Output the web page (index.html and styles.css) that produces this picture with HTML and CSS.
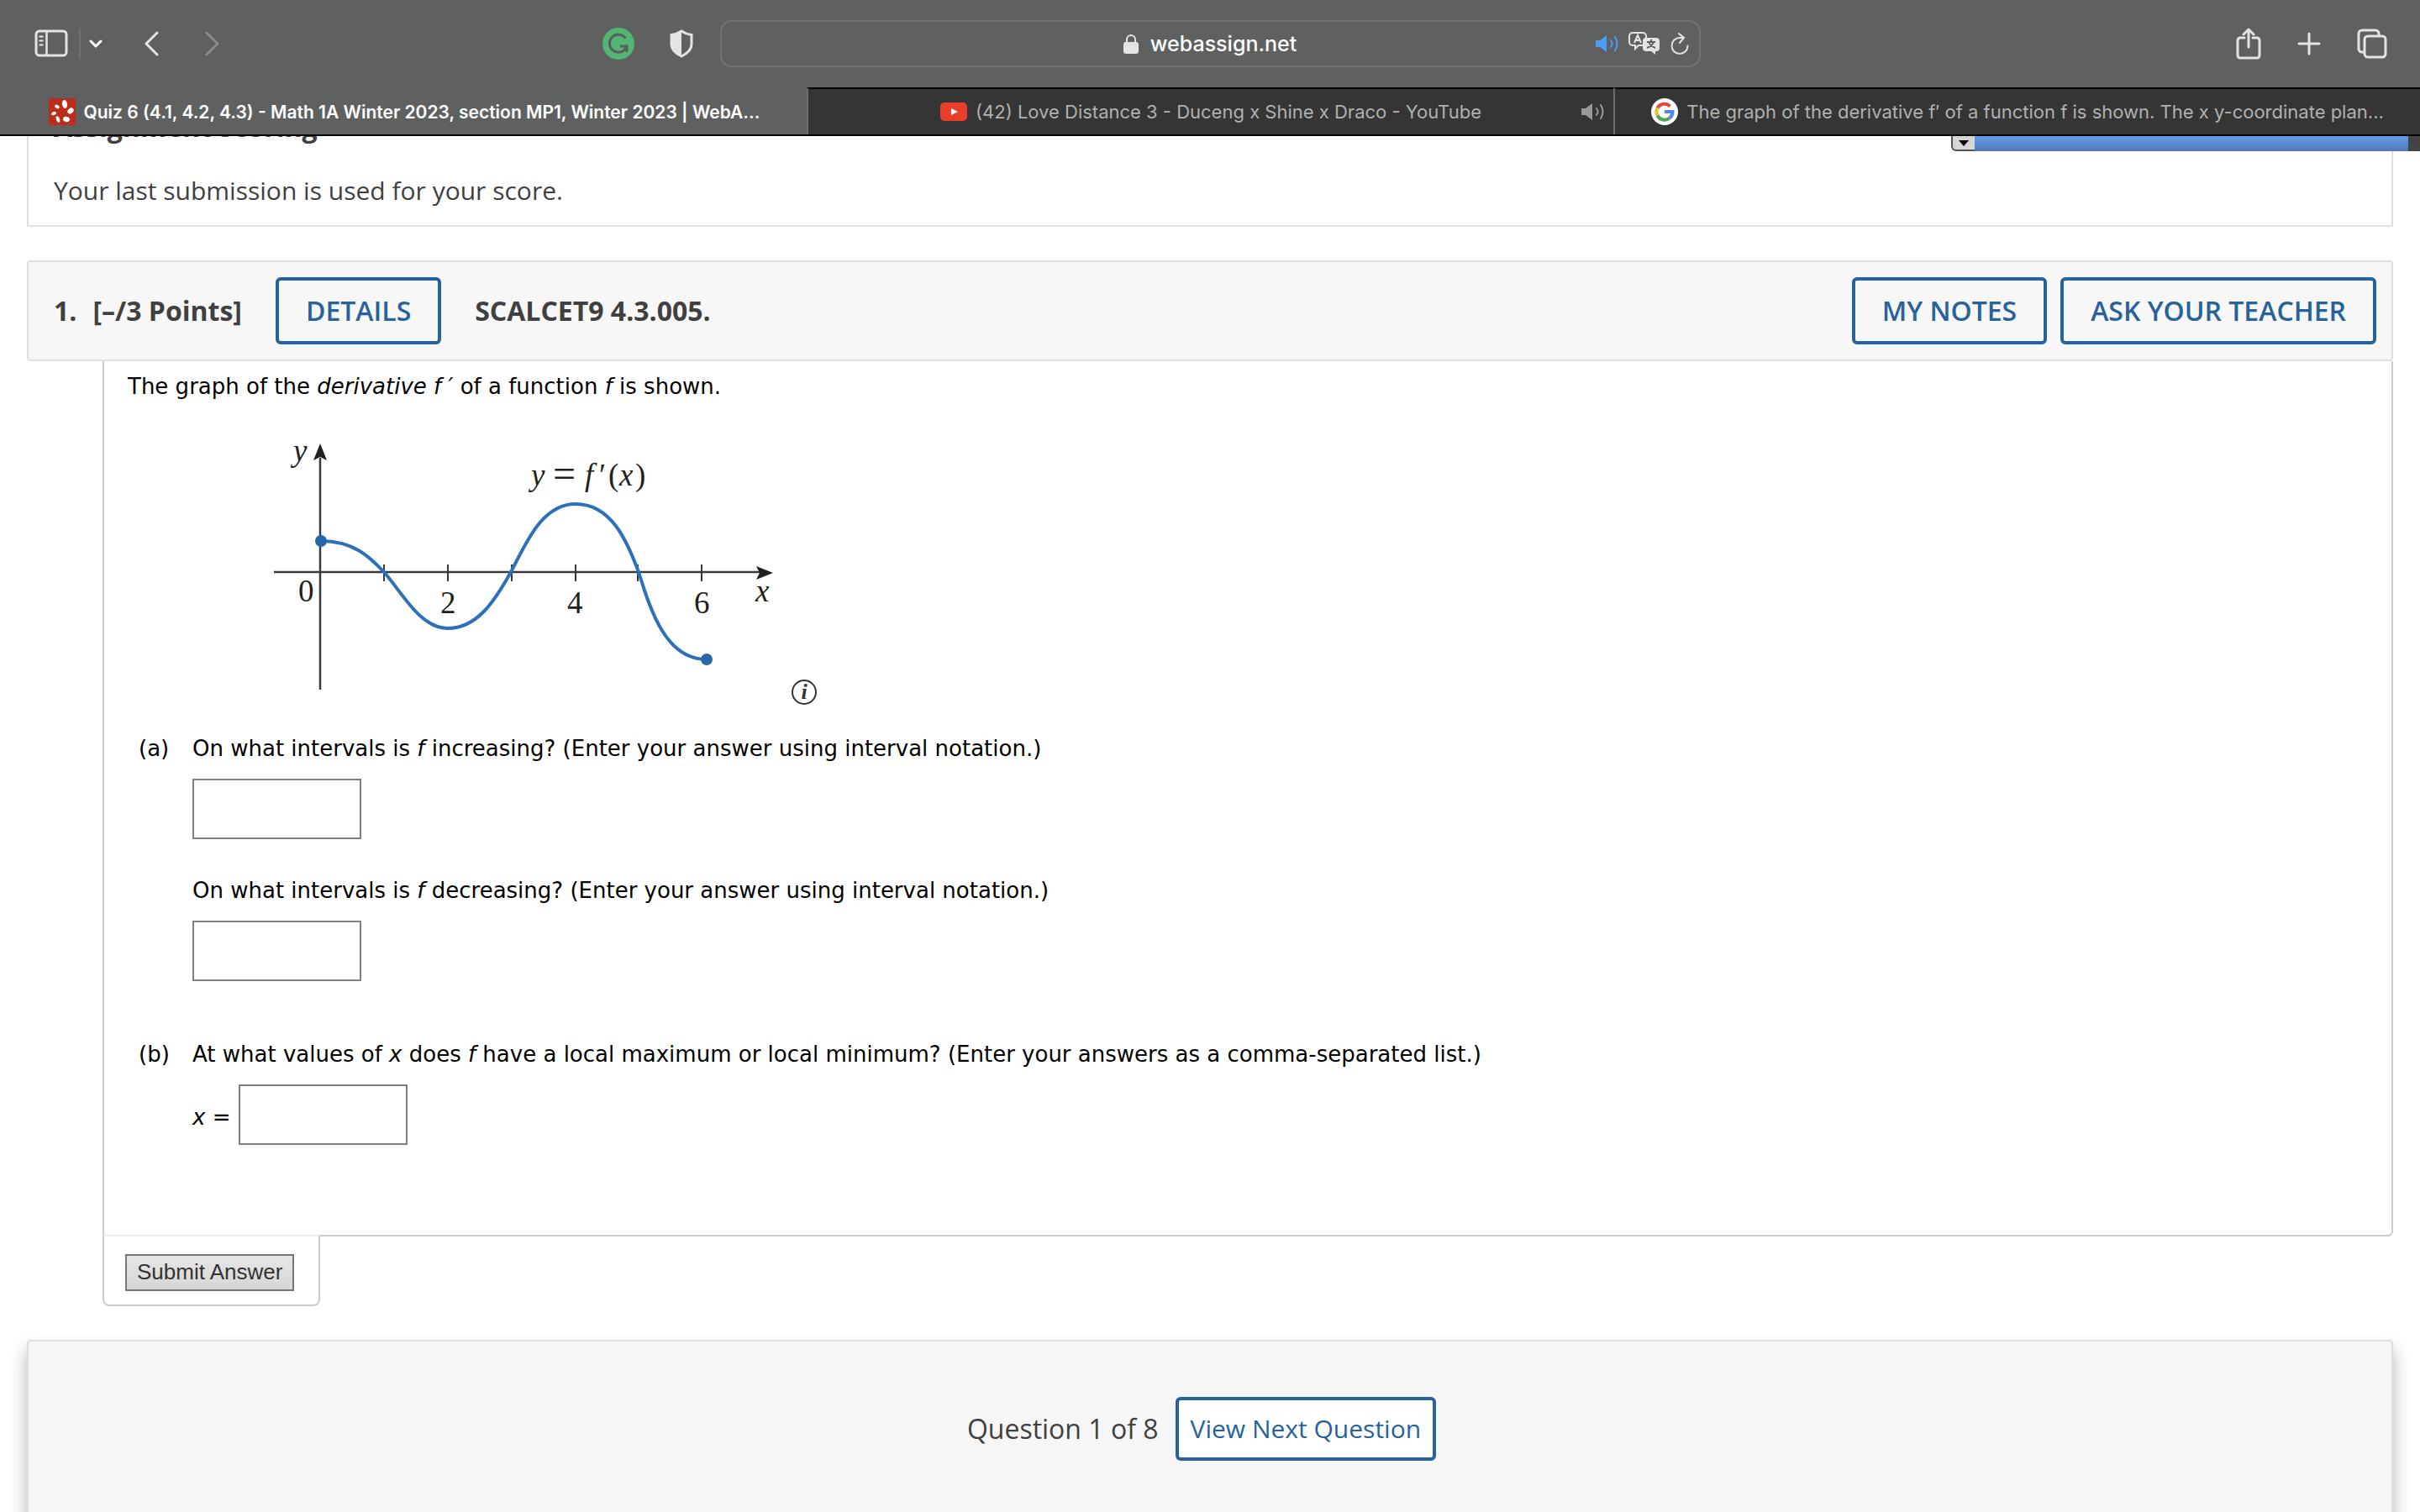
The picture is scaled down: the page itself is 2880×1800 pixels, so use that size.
FILE: index.html
```
<!DOCTYPE html>
<html lang="en">
<head>
  <meta charset="UTF-8" />
  <meta name="viewport" content="width=device-width, initial-scale=1" />
  <title>Quiz 6 (4.1, 4.2, 4.3) - WebAssign</title>
  <link rel="stylesheet" href="styles.css">
</head>
<body>
  <header class="browser">
    <div class="toolbar">
      <div class="toolbar-side">
        <div class="tools tools-left">
          <button class="tool sidebar" aria-label="Sidebar">
            <svg width="40" height="34" viewBox="0 0 40 34" fill="none" stroke="currentColor" stroke-width="3">
              <rect x="2" y="2" width="36" height="29" rx="4" />
              <path d="M14.500 2v29" stroke-width="2.500" />
              <path d="M5.500 8.500h5M5.500 13.500h5M5.500 18.500h5" stroke-width="2" />
            </svg>
          </button>
          <span class="divider"></span>
          <button class="tool tab-groups" aria-label="Tab groups">
            <svg width="16" height="12" viewBox="0 0 16 12" fill="none" stroke="#fff" stroke-width="3" stroke-linecap="round" stroke-linejoin="round"><path d="M2 3l6 6 6-6" /></svg>
          </button>
          <button class="tool back" aria-label="Back">
            <svg width="18" height="32" viewBox="0 0 18 32" fill="none" stroke="currentColor" stroke-width="3" stroke-linecap="round" stroke-linejoin="round"><path d="M16 3L3 16l13 13" /></svg>
          </button>
          <button class="tool forward" aria-label="Forward" disabled>
            <svg width="18" height="32" viewBox="0 0 18 32" fill="none" stroke="currentColor" stroke-width="3" stroke-linecap="round" stroke-linejoin="round"><path d="M2 3l13 13L2 29" /></svg>
          </button>
        </div>
        <div class="tools tools-ext">
          <button class="tool" aria-label="Grammarly">
            <svg width="38" height="38" viewBox="0 0 38 38" fill="none">
              <circle cx="19" cy="19" r="19" fill="#52b475" />
              <path d="M27.500 12.500a10.500 10.500 0 1 0 1 10.500M21 22h8v7" stroke="#565f59" stroke-width="3" />
            </svg>
          </button>
          <button class="tool" aria-label="Privacy report">
            <svg width="28" height="34" viewBox="0 0 28 34">
              <path d="M14 2C11 4 6 6 2 6.500V18c0 7 6 11 12 14 6-3 12-7 12-14V6.500C22 6 17 4 14 2z" fill="none" stroke="#e3e4e3" stroke-width="3" />
              <path d="M14 2C11 4 6 6 2 6.500V18c0 7 6 11 12 14z" fill="#e3e4e3" />
            </svg>
          </button>
        </div>
      </div>
      <div class="address">
        <div class="site">
          <svg width="18" height="24" viewBox="0 0 18 24">
            <path d="M4 12V7a5 5 0 0 1 10 0v5" fill="none" stroke="#e3e4e3" stroke-width="2" />
            <rect y="10" width="18" height="14" rx="3" fill="#e3e4e3" />
          </svg>
          <span>webassign.net</span>
        </div>
        <div class="address-icons">
          <svg width="28" height="22" viewBox="0 0 28 22" fill="none" stroke="#4c9cf7" stroke-width="2" stroke-linecap="round">
            <path d="M1 7h5l8-6v20l-8-6H1z" fill="#4c9cf7" stroke="none" />
            <path d="M19 7q3 4 0 8M24 3q5 8 0 16" />
          </svg>
          <svg width="38" height="28" viewBox="0 0 38 28" fill="none" stroke="#e3e4e3" stroke-width="2">
            <path d="M17 16h-5l-4 4v-4H5a4 4 0 0 1-4-4V5a4 4 0 0 1 4-4h12a4 4 0 0 1 4 4v2" />
            <path d="M7 13l4-9 4 9M8 10h6" />
            <path d="M21 7h12a4 4 0 0 1 4 4v8a4 4 0 0 1-4 4h-1v4l-5-4h-6a4 4 0 0 1-4-4v-8a4 4 0 0 1 4-4z" fill="#e3e4e3" stroke="none" />
            <path d="M22 12h10M27 9v3M30 12q-2 5-8 7M24 12q2 5 8 7" stroke="#5f6160" />
          </svg>
          <svg width="22" height="26" viewBox="0 0 22 26" fill="none" stroke="#e3e4e3" stroke-width="2" stroke-linecap="round">
            <path d="M15 6h-4a9.500 9.500 0 1 0 9.500 9.500M10 1l6 5-5 6" />
          </svg>
        </div>
      </div>
      <div class="tools tools-right">
        <button class="tool" aria-label="Share">
          <svg width="30" height="38" viewBox="0 0 30 38" fill="none" stroke="currentColor" stroke-width="3" stroke-linecap="round" stroke-linejoin="round">
            <path d="M10 12H5a3 3 0 0 0-3 3v18a3 3 0 0 0 3 3h20a3 3 0 0 0 3-3V15a3 3 0 0 0-3-3h-5M15 23V2M9 8l6-6 6 6" />
          </svg>
        </button>
        <button class="tool" aria-label="New tab">
          <svg width="28" height="28" viewBox="0 0 28 28" fill="none" stroke="currentColor" stroke-width="3" stroke-linecap="round"><path d="M14 2v24M2 14h24" /></svg>
        </button>
        <button class="tool" aria-label="Show tabs">
          <svg width="36" height="36" viewBox="0 0 36 36" fill="none" stroke="currentColor" stroke-width="3">
            <path d="M9 28H6a4 4 0 0 1-4-4V6a4 4 0 0 1 4-4h16a4 4 0 0 1 4 4v2" />
            <rect x="9" y="9" width="25" height="25" rx="4" />
          </svg>
        </button>
      </div>
    </div>

    <nav class="tabs">
      <a class="tab active" href="#">
        <svg width="32" height="32" viewBox="0 0 32 32">
          <rect width="32" height="32" fill="#bd2d1d" />
          <g fill="#fff">
            <ellipse cx="19" cy="7" rx="3" ry="5" transform="rotate(-8 19 7)" />
            <ellipse cx="26" cy="15" rx="4" ry="3" transform="rotate(-40 26 15)" />
            <ellipse cx="21" cy="25" rx="4" ry="3" transform="rotate(15 21 25)" />
            <ellipse cx="11" cy="25" rx="2" ry="4" transform="rotate(-20 11 25)" />
            <ellipse cx="6" cy="18" rx="3" ry="2" transform="rotate(-25 6 18)" />
            <ellipse cx="10" cy="10" rx="3" ry="2" transform="rotate(30 10 10)" />
          </g>
        </svg>
        <span>Quiz 6 (4.1, 4.2, 4.3) - Math 1A Winter 2023, section MP1, Winter 2023 | WebA...</span>
      </a>
      <a class="tab" href="#">
        <svg width="32" height="24" viewBox="0 0 32 24">
          <rect y="1" width="32" height="22" rx="5" fill="#e93f2a" />
          <path d="M13 8l8 4-8 4z" fill="#fff" />
        </svg>
        <span>(42) Love Distance 3 - Duceng x Shine x Draco - YouTube</span>
        <svg class="tab-sound" width="28" height="22" viewBox="0 0 28 22" fill="none" stroke="#989998" stroke-width="2" stroke-linecap="round">
          <path d="M1 7h5l8-6v20l-8-6H1z" fill="#989998" stroke="none" />
          <path d="M19 7q3 4 0 8M24 3q5 8 0 16" />
        </svg>
      </a>
      <a class="tab" href="#">
        <svg width="32" height="32" viewBox="0 0 32 32" fill="none" stroke-width="4">
          <circle cx="16" cy="16" r="16" fill="#fff" />
          <path d="M22.500 9.500A9.500 9.500 0 0 0 7.500 11.500" stroke="#dc4b3e" />
          <path d="M7.500 11.500a9.500 9.500 0 0 0 0 9" stroke="#f3bb2e" />
          <path d="M7.500 20.500a9.500 9.500 0 0 0 14.500 3" stroke="#4ea555" />
          <path d="M22 23.500a9.500 9.500 0 0 0 3.500-7.500h-9.500" stroke="#4d86ec" />
        </svg>
        <span>The graph of the derivative f′ of a function f is shown. The x y-coordinate plan...</span>
      </a>
    </nav>
  </header>

  <main class="page">
    <div class="player-bar">
      <button class="player-toggle" aria-label="Collapse"></button>
      <div class="player-track"></div>
      <div class="player-end"></div>
    </div>

    <section class="scoring">
      <h2>Assignment Scoring</h2>
      <p>Your last submission is used for your score.</p>
    </section>

    <section class="question">
      <div class="question-header">
        <span class="number">1.</span>
        <span class="points">[–/3 Points]</span>
        <button class="outline-btn details">DETAILS</button>
        <span class="source">SCALCET9 4.3.005.</span>
        <div class="header-actions">
          <button class="outline-btn">MY NOTES</button>
          <button class="outline-btn">ASK YOUR TEACHER</button>
        </div>
      </div>

      <div class="question-body">
        <p class="intro">The graph of the <i>derivative f ′</i> of a function <i>f</i> is shown.</p>

        <div class="figure">
          <svg class="graph" width="620" height="319" viewBox="310 520 620 319">
            <g stroke="#3a3a3c" stroke-width="2.500" fill="none">
              <path d="M326 681H910M381 545V821" />
              <path d="M457 672v20M533 672v20M609 672v20M685 672v20M759 672v20M835 672v20" stroke-width="2" />
            </g>
            <g fill="#231f20">
              <path d="M381 528l8 20-8-4-8 4z" />
              <path d="M920 682l-20-8 4 8-4 8z" />
            </g>
            <path d="M382 644C421 644 440 663 457 681C479 706 500 748 533 748C568 748 589 715 608 681C625 649 644 600 685 600C727 600 746 643 760 681C775 729 793 785 841 785" fill="none" stroke="#2b70b8" stroke-width="4" />
            <circle cx="382" cy="644" r="7" fill="#2666ae" />
            <circle cx="841" cy="785" r="7" fill="#2b68a4" />
            <g class="graph-text">
              <text x="349" y="549" font-style="italic">y</text>
              <text x="355" y="716">0</text>
              <text x="524" y="730">2</text>
              <text x="675" y="730">4</text>
              <text x="826" y="730">6</text>
              <text x="899" y="716" font-style="italic">x</text>
              <text x="632" y="578" font-style="italic">y</text>
              <text class="equals" x="658" y="580">=</text>
              <text x="696" y="578" font-style="italic">f</text>
              <text x="713" y="578">′</text>
              <text x="724" y="578">(</text>
              <text x="737" y="578" font-style="italic">x</text>
              <text x="756" y="578">)</text>
            </g>
          </svg>
          <button class="info" aria-label="Figure description">i</button>
        </div>

        <div class="part">
          <span class="part-label">(a)</span>
          <div class="part-content">
            <label for="increasing">On what intervals is <i>f</i> increasing? (Enter your answer using interval notation.)</label>
            <input type="text" id="increasing">
            <label class="second" for="decreasing">On what intervals is <i>f</i> decreasing? (Enter your answer using interval notation.)</label>
            <input type="text" id="decreasing">
          </div>
        </div>

        <div class="part">
          <span class="part-label">(b)</span>
          <div class="part-content">
            <p>At what values of <i>x</i> does <i>f</i> have a local maximum or local minimum? (Enter your answers as a comma-separated list.)</p>
            <div class="inline-answer">
              <label for="extrema"><i>x</i> =</label>
              <input type="text" id="extrema">
            </div>
          </div>
        </div>
      </div>

      <div class="submit-box">
        <button class="submit">Submit Answer</button>
      </div>
    </section>

    <footer class="question-nav">
      <span>Question 1 of 8</span>
      <button class="outline-btn next">View Next Question</button>
    </footer>
  </main>
</body>
</html>
```

FILE: styles.css
```
* {
  box-sizing: border-box;
}

body {
  margin: 0;
  height: 100vh;
  display: flex;
  flex-direction: column;
  overflow: hidden;
  background: #fff;
  color: #404040;
  font-family: 'Open Sans', sans-serif;
}

h2, p {
  margin: 0;
}

svg {
  display: block;
  flex: none;
}

button {
  font-family: inherit;
  white-space: nowrap;
  cursor: pointer;
}

/* Browser bar */
.browser {
  flex: none;
  background: #5f6160;
  border-bottom: 2px solid #000;
  font-family: Inter, sans-serif;
}

.toolbar {
  display: grid;
  grid-template-columns: 1fr auto 1fr;
  align-items: center;
  height: 104px;
}

.toolbar-side {
  display: flex;
  align-items: center;
  justify-content: space-between;
}

.tools {
  display: flex;
  align-items: center;
}

.tool {
  padding: 0;
  border: 0;
  background: none;
  color: #e3e4e3;
}

.tools-left {
  padding-left: 41px;
}

.divider {
  width: 2px;
  height: 36px;
  margin: 0 10px 0 13px;
  background: #6e706f;
}

.back {
  margin-left: 49px;
}

.forward {
  margin-left: 55px;
  color: #8a8c8b;
}

.tools-ext {
  gap: 42px;
  margin-right: 32px;
}

.address {
  display: grid;
  grid-template-columns: 1fr auto 1fr;
  align-items: center;
  width: 1167px;
  height: 56px;
  padding: 0 12px;
  border: 2px solid #727473;
  border-radius: 14px;
}

.site {
  grid-column: 2;
  display: flex;
  align-items: center;
  gap: 14px;
  color: #fff;
  font-size: 25px;
  font-weight: 500;
}

.address-icons {
  display: flex;
  align-items: center;
  justify-self: end;
  gap: 12px;
}

.tools-right {
  justify-content: flex-end;
  gap: 43px;
  padding-right: 39px;
}

.tabs {
  display: flex;
  height: 56px;
}

.tab {
  flex: 1;
  position: relative;
  display: flex;
  align-items: center;
  justify-content: center;
  gap: 10px;
  min-width: 0;
  border-top: 2px solid #000;
  border-left: 2px solid #6e706f;
  background: #343534;
  color: #b0b1b0;
  font-size: 22px;
  text-decoration: none;
  white-space: nowrap;
}

.tab.active {
  background: none;
  border-color: transparent;
  color: #fff;
  font-size: 21px;
  font-weight: 600;
}

.tab-sound {
  position: absolute;
  right: 11px;
}

/* Page */
.page {
  flex: 1;
  position: relative;
  min-height: 0;
  overflow: hidden;
  padding: 0 32px;
}

.player-bar {
  position: absolute;
  top: 0;
  right: 0;
  display: flex;
  width: 558px;
  height: 18px;
}

.player-toggle {
  display: flex;
  align-items: center;
  justify-content: center;
  width: 28px;
  padding: 0;
  border: solid #555;
  border-width: 0 0 2px 2px;
  border-radius: 0 0 0 6px;
  background: #d6d6d6;
}

.player-toggle::before {
  content: '';
  border: 6px solid transparent;
  border-top: 7px solid #000;
  border-bottom: 0;
}

.player-track {
  flex: 1;
  background: linear-gradient(#649ceb, #5079b3);
}

.player-end {
  width: 14px;
  background: #444;
}

/* The page is scrolled, so the heading is partly under the browser bar */
.scoring {
  margin-top: -50px;
  padding: 15px 30px 17px;
  border: 2px solid #e0e0e0;
}

.scoring h2 {
  font-size: 32px;
  line-height: 44px;
}

.scoring p {
  margin-top: 30px;
  font-size: 30px;
  line-height: 48px;
}

.question {
  margin-top: 40px;
}

.question-header {
  display: flex;
  align-items: center;
  height: 120px;
  padding: 0 18px 0 30px;
  border: 2px solid #e0e0e0;
  border-radius: 4px;
  background: #f7f7f7;
  font-size: 32px;
  font-weight: 700;
}

.number,
.points,
.source {
  padding-bottom: 2px;
}

.points {
  margin-left: 19px;
}

.outline-btn {
  height: 80px;
  padding: 0 32px 2px;
  border: 4px solid #28629a;
  border-radius: 6px;
  background: transparent;
  color: #28629a;
  font-size: 32px;
  font-weight: 600;
}

.details {
  margin: 0 40px;
}

.header-actions {
  display: flex;
  gap: 16px;
  margin-left: auto;
}

.question-body {
  margin-left: 90px;
  padding: 10px 28px 107px;
  border: 2px solid #ccc;
  border-top: 0;
  border-radius: 0 0 6px 0;
  color: #000;
  font-family: Verdana, 'DejaVu Sans', sans-serif;
  font-size: 26px;
  line-height: 40px;
}

.figure {
  display: flex;
  align-items: flex-end;
  margin: 40px 0 32px 158px;
}

.graph-text {
  fill: #231f20;
  font-family: 'Liberation Serif', serif;
  font-size: 37px;
}

.equals {
  font-size: 48px;
}

.info {
  width: 30px;
  height: 30px;
  margin-left: 12px;
  padding: 0;
  border: 2px solid #333;
  border-radius: 50%;
  background: none;
  color: #333;
  font: italic bold 26px/26px 'Liberation Serif', serif;
}

.part {
  display: flex;
  margin: 0 0 67px 13px;
}

.part:last-child {
  margin-bottom: 0;
}

.part-label {
  width: 64px;
}

.part-content label,
.part-content input {
  display: block;
}

.part-content input {
  width: 201px;
  height: 72px;
  margin-top: 16px;
  padding: 0 8px;
  border: 2px solid #808080;
  background: #fff;
  font-size: 26px;
}

.part-content .second {
  margin-top: 41px;
}

.inline-answer {
  display: flex;
  align-items: center;
  gap: 10px;
  margin-top: 16px;
}

.inline-answer label {
  padding-top: 6px;
}

.part-content .inline-answer input {
  margin-top: 0;
}

/* Pulled up so that it covers the bottom border of the question body */
.submit-box {
  position: relative;
  width: 259px;
  margin: -2px 0 0 90px;
  padding: 21px 25px 16px;
  border: 2px solid #ccc;
  border-top-color: #eee;
  border-radius: 0 0 8px 8px;
  background: #fff;
}

.submit {
  display: block;
  height: 44px;
  padding: 0 12px 2px;
  border: 2px solid #767676;
  background: linear-gradient(#e6e6e6, #d6d6d6);
  color: #333;
  font-family: 'Liberation Sans', Arial, sans-serif;
  font-size: 26px;
}

.question-nav {
  display: flex;
  align-items: flex-start;
  justify-content: center;
  gap: 20px;
  min-height: 320px;
  margin-top: 40px;
  padding: 66px 20px 66px 0;
  border: 2px solid #e0e0e0;
  border-radius: 4px;
  background: #f6f6f6;
  box-shadow: 0 12px 20px rgba(0, 0, 0, 0.3);
  font-size: 32px;
  line-height: 76px;
}

.next {
  height: 76px;
  padding: 0 14px 2px;
  background: #fff;
  font-size: 30px;
  font-weight: 400;
}
```
